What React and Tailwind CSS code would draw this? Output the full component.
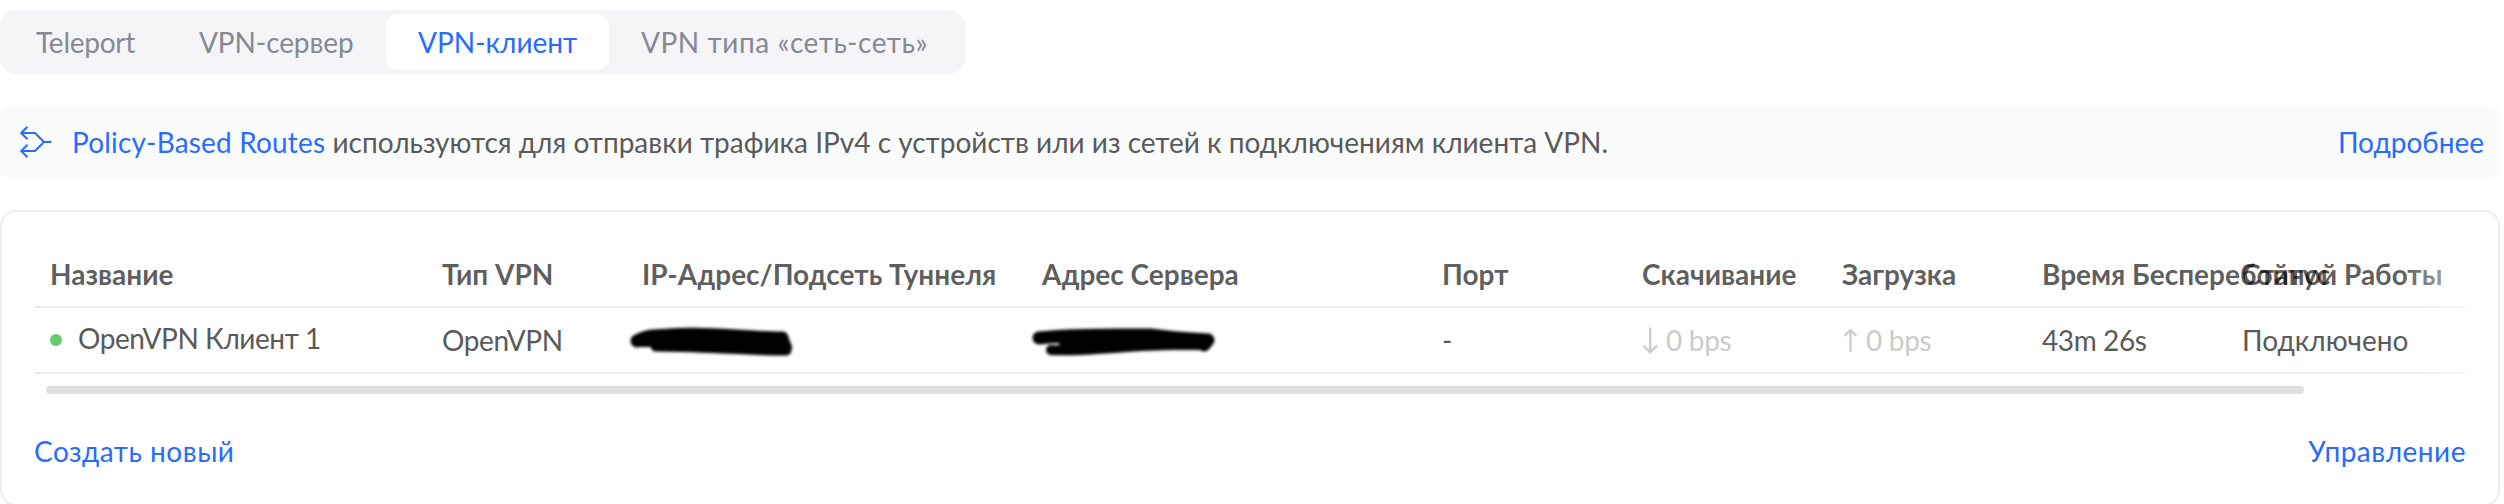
const tabs = [
  { label: 'Teleport', style: 'w-[162px] pl-8 tracking-[-0.25px] text-[#868994]' },
  { label: 'VPN-сервер', style: 'w-[220px] pl-[33px] tracking-[-0.1px] text-[#868994]' },
  { label: 'VPN-клиент', style: 'w-[223px] rounded-xl bg-white pl-8 text-[#2a6bff]' },
  { label: 'VPN типа «сеть-сеть»', style: 'pl-8 tracking-[0.55px] text-[#868994]' },
]

const columns = ['Название', 'Тип VPN', 'IP-Адрес/Подсеть Туннеля', 'Адрес Сервера', 'Порт', 'Скачивание', 'Загрузка', 'Время Бесперебойной Работы', 'Статус']

const grid = 'grid grid-cols-[392px_200px_400px_400px_200px_200px_200px_200px_1fr] whitespace-nowrap pl-4'

function RouteIcon() {
  return (
    <svg className="h-8 w-8" viewBox="0 0 32 32" fill="none" stroke="#2a6bff" strokeWidth="2">
      <path d="M1.500 7H15l9 9-9 9H1.500M24 16H31.500M7.500 .7 1.200 7 7.500 13.300M7.500 18.700 1.200 25 7.500 31.300" />
    </svg>
  )
}

function Rate({ up, children }) {
  return (
    <span className="flex items-center text-[#cbcbcb]">
      <svg className="mr-2 h-[30px] w-4 shrink-0" viewBox="0 0 16 30" fill="none" stroke="currentColor" strokeWidth="2.200">
        {up ? <path d="M8.500 27V5.500M2.500 11l6-6 6 6" /> : <path d="M8.200 2.500v24.500M1.200 20.500l7 7 7-7" />}
      </svg>
      <span className="tracking-[-0.3px]">{children}</span>
    </span>
  )
}

// addresses are blacked out with a marker stroke
function TunnelMask() {
  return (
    <svg className="-ml-5 h-[60px] w-[190px]" viewBox="0 0 190 60" fill="none" stroke="#000" strokeLinecap="round" strokeLinejoin="round">
      <g className="blur-[1.5px]">
        <path strokeWidth="13" d="M15 31C24 25 34 26 48 25C88 22 120 28 160 28L163 37" />
        <path strokeWidth="12" d="M15 31H60C95 32 125 33 164 37" />
        <path strokeWidth="11" d="M34 36C80 36 120 40 164 40" />
      </g>
    </svg>
  )
}

function ServerMask() {
  return (
    <svg className="-ml-5 h-[60px] w-[210px]" viewBox="0 0 210 60" fill="none" stroke="#000" strokeLinecap="round" strokeLinejoin="round">
      <g className="blur-[1.5px]">
        <path strokeWidth="13" d="M17 28C50 24 95 25 128 25C150 28 165 29 186 30L182 35" />
        <path strokeWidth="12" d="M42 31C90 33 140 33 182 34" />
        <path strokeWidth="10" d="M29 40C65 42 110 35 150 35H180" />
      </g>
    </svg>
  )
}

export default function App() {
  return (
    <div className="h-[504px] w-[2504px] overflow-hidden bg-white pt-2.5 font-['Lato',sans-serif] text-[28px] leading-10 text-[#5a5a5a]">
      <div className="flex h-16 w-[965px] rounded-2xl bg-[#f5f5f8] p-1">
        {tabs.map((tab) => (
          <button key={tab.label} className={`text-left whitespace-nowrap ${tab.style}`}>
            {tab.label}
          </button>
        ))}
      </div>

      <div className="mt-8 flex h-[72px] w-[2500px] items-center rounded-lg bg-[#fafcfb] pr-4 pl-5">
        <RouteIcon />
        <p className="ml-5 flex-1">
          <a className="tracking-[0.17px] text-[#2a6bff]">Policy-Based Routes</a> используются для отправки трафика IPv4 с устройств или из сетей к подключениям клиента VPN.
        </p>
        <a className="text-[#2a6bff]">Подробнее</a>
      </div>

      <section className="mt-8 h-[296px] w-[2500px] rounded-2xl border-2 border-[#ededed] px-8 pt-[42px]">
        <div className="relative">
          <div className={`${grid} h-[54px] border-b-2 border-[#ededed] font-bold text-black/65`}>
            {columns.map((c) => <span key={c}>{c}</span>)}
          </div>
          <div className={`${grid} h-[66px] items-center border-b-2 border-[#ededed]`}>
            <span className="flex items-center pb-1">
              <i className="mt-1 mr-4 h-3 w-3 rounded-full bg-[#66cb71]" />
              <span className="tracking-[-0.45px]">OpenVPN Клиент 1</span>
            </span>
            <span className="tracking-[-0.4px]">OpenVPN</span>
            <span><TunnelMask /></span>
            <span><ServerMask /></span>
            <span>-</span>
            <Rate>0 bps</Rate>
            <Rate up>0 bps</Rate>
            <span className="tracking-[-0.4px]">43m 26s</span>
            <span>Подключено</span>
          </div>
          {/* right edge fade of the scroll area */}
          <div className="absolute inset-y-0 right-0 w-16 bg-linear-to-r from-white/0 to-white/60" />
        </div>
        <div className="mt-3 ml-3 h-2 w-[2258px] rounded-full bg-[#e0e0e0]" />
        <div className="mt-[37px] flex justify-between text-[#2a6bff]">
          <a className="tracking-[0.5px]">Создать новый</a>
          <a className="tracking-[0.5px]">Управление</a>
        </div>
      </section>
    </div>
  )
}
